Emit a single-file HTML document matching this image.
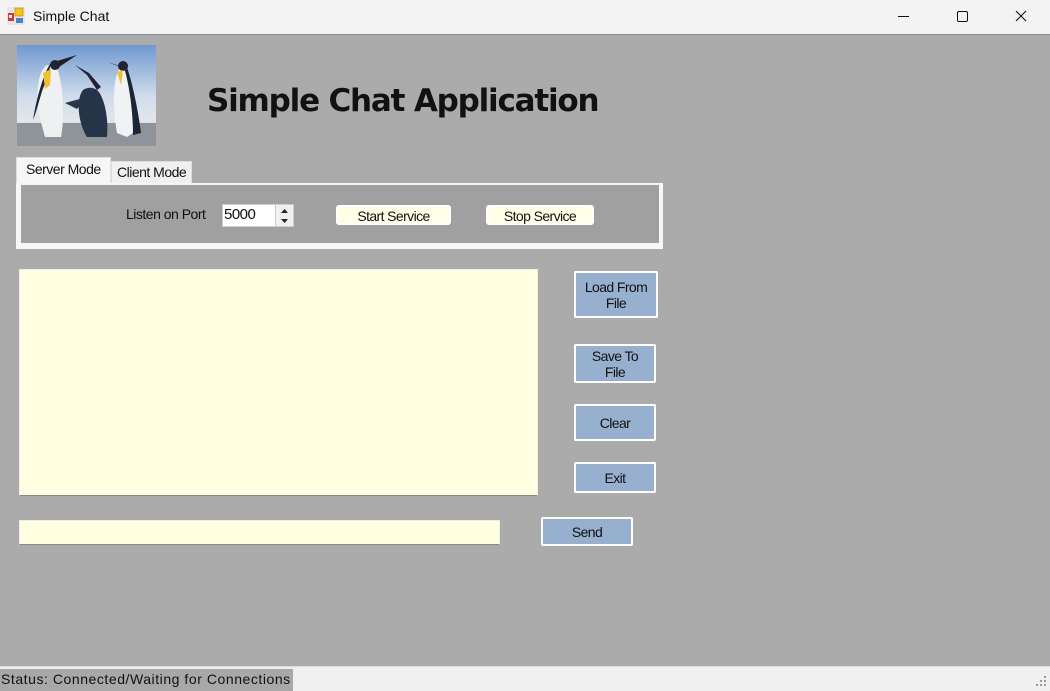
<!DOCTYPE html>
<html><head><meta charset="utf-8"><style>
*{margin:0;padding:0;box-sizing:border-box}
body{width:1050px;height:691px;overflow:hidden;background:#ababab;font-family:"Liberation Sans",sans-serif;position:relative}
.a{position:absolute}
.t{font-size:14px;color:#111;letter-spacing:-0.5px}
.btn{position:absolute;background:#97b0cf;border:2px solid #fff;border-radius:2px;font-size:14px;color:#111;letter-spacing:-0.6px;text-align:center;display:flex;align-items:center;justify-content:center;line-height:16px}
.ivb{position:absolute;background:#ffffe8;border:2px solid #fff;border-radius:3px;font-size:14px;color:#111;letter-spacing:-0.6px;text-align:center;line-height:18px}
</style></head><body>
<div class="a" style="left:0;top:0;width:1050px;height:35px;background:#f3f3f3;border-bottom:1px solid #8a8a8a"></div>
<svg class="a" style="left:7px;top:7px" width="18" height="18" viewBox="0 0 18 18">
<rect x="0" y="0" width="18" height="18" fill="#e6e6e6"/><rect x="1" y="6" width="6" height="8" fill="#d33"/><rect x="2" y="8" width="3" height="3" fill="#fff"/><rect x="8" y="1" width="8" height="8" fill="#f5c518" stroke="#b8860b" stroke-width="0.6"/><rect x="9" y="11" width="7" height="5" fill="#4a7fd0"/></svg>
<div class="a" style="left:33px;top:8px;font-size:14px;color:#111">Simple Chat</div>
<svg class="a" style="left:890px;top:0" width="160" height="35"><line x1="8" y1="16.5" x2="19" y2="16.5" stroke="#111" stroke-width="1"/><rect x="67.5" y="11.5" width="10" height="10" rx="1.5" fill="none" stroke="#111"/><path d="M126 11L136 21M136 11L126 21" stroke="#111" stroke-width="1.1"/></svg>

<svg class="a" style="left:17px;top:45px" width="139" height="101" viewBox="0 0 139 101">
<defs><linearGradient id="s" x1="0" y1="0" x2="0" y2="1"><stop offset="0" stop-color="#6f98d0"/><stop offset="0.5" stop-color="#cfdcec"/><stop offset="0.75" stop-color="#e2e6ea"/><stop offset="1" stop-color="#9aa1a8"/></linearGradient></defs>
<rect width="139" height="101" fill="url(#s)"/>
<rect y="78" width="139" height="23" fill="#8f949a"/>
<path d="M30 20C22 25 18 45 22 70L28 92 44 92C48 70 46 40 40 22Z" fill="#eef0f2"/>
<path d="M34 18C28 25 20 50 16 75 22 60 24 45 30 35Z" fill="#1e2736"/>
<path d="M40 16L60 10 42 22Z" fill="#222"/><circle cx="38" cy="20" r="5" fill="#223"/>
<path d="M66 45C58 55 62 80 70 92L90 92C92 70 86 50 80 45 76 42 70 42 66 45Z" fill="#26344a"/>
<path d="M80 45L70 30 58 20 72 28 84 42Z" fill="#223"/>
<path d="M48 58L70 52 60 64Z" fill="#2a3548"/>
<path d="M104 22C96 30 95 60 100 88L110 92 120 85C118 60 114 30 110 22Z" fill="#f0f2f4"/>
<path d="M110 22C116 40 122 70 124 88L116 90C116 65 112 40 108 26Z" fill="#1c2535"/>
<path d="M100 20L90 17 104 22Z" fill="#222"/><circle cx="106" cy="21" r="5" fill="#223"/>
<path d="M26 28L34 24 33 40 28 44Z" fill="#f0c030"/><path d="M100 27L106 25 104 40Z" fill="#f0c030"/>
</svg>

<div class="a" style="left:207px;top:83px;font-size:31px;font-weight:bold;color:#111;font-family:'DejaVu Sans',sans-serif;letter-spacing:-1.2px">Simple Chat Application</div>

<div class="a" style="left:16px;top:157px;width:95px;height:28px;background:#f7f7f7;border:1px solid #ddd;border-bottom:none"></div>
<div class="a t" style="left:26px;top:161px">Server Mode</div>
<div class="a" style="left:111px;top:161px;width:81px;height:23px;background:#f0f0f0;border:1px solid #ddd;border-bottom:none"></div>
<div class="a t" style="left:117px;top:164px">Client Mode</div>
<div class="a" style="left:16px;top:183px;width:647px;height:66px;background:#f7f7f7"></div>
<div class="a" style="left:21px;top:185px;width:638px;height:58px;background:#a0a0a0"></div>
<div class="a t" style="left:126px;top:206px">Listen on Port</div>
<div class="a" style="left:222px;top:204px;width:72px;height:23px;background:#fff;border:1px solid #ccc"></div>
<div class="a" style="left:224px;top:206px;font-size:15px;color:#111;letter-spacing:-0.5px">5000</div>
<div class="a" style="left:275px;top:205px;width:18px;height:21px;background:#f0f0f0;border-left:1px solid #ccc"></div>
<svg class="a" style="left:276px;top:205px" width="17" height="21"><path d="M5 8L8.5 4 12 8Z M5 14L8.5 18 12 14Z" fill="#222"/></svg>
<div class="ivb" style="left:336px;top:205px;width:115px;height:20px">Start Service</div>
<div class="ivb" style="left:486px;top:205px;width:108px;height:20px">Stop Service</div>

<div class="a" style="left:19px;top:269px;width:519px;height:227px;background:#ffffe2;border:1px solid #ececec;border-bottom-color:#888"></div>
<div class="btn" style="left:574px;top:271px;width:84px;height:47px">Load From<br>File</div>
<div class="btn" style="left:574px;top:344px;width:82px;height:39px">Save To<br>File</div>
<div class="btn" style="left:574px;top:404px;width:82px;height:37px">Clear</div>
<div class="btn" style="left:574px;top:462px;width:82px;height:31px">Exit</div>
<div class="a" style="left:19px;top:520px;width:481px;height:25px;background:#ffffe2;border:1px solid #ececec;border-bottom-color:#888"></div>
<div class="btn" style="left:541px;top:517px;width:92px;height:29px">Send</div>

<div class="a" style="left:0;top:666px;width:1050px;height:25px;background:#f0f0f0;border-top:1px solid #ddd"></div>
<div class="a" style="left:0;top:669px;width:293px;height:22px;background:#a8a8a8"></div>
<div class="a" style="left:1px;top:671px;font-size:14px;color:#111;letter-spacing:0.55px">Status: Connected/Waiting for Connections</div>
<svg class="a" style="left:1036px;top:676px" width="12" height="12"><g fill="#999"><rect x="8" y="0" width="2" height="2"/><rect x="4" y="4" width="2" height="2"/><rect x="8" y="4" width="2" height="2"/><rect x="0" y="8" width="2" height="2"/><rect x="4" y="8" width="2" height="2"/><rect x="8" y="8" width="2" height="2"/></g></svg>
</body></html>
